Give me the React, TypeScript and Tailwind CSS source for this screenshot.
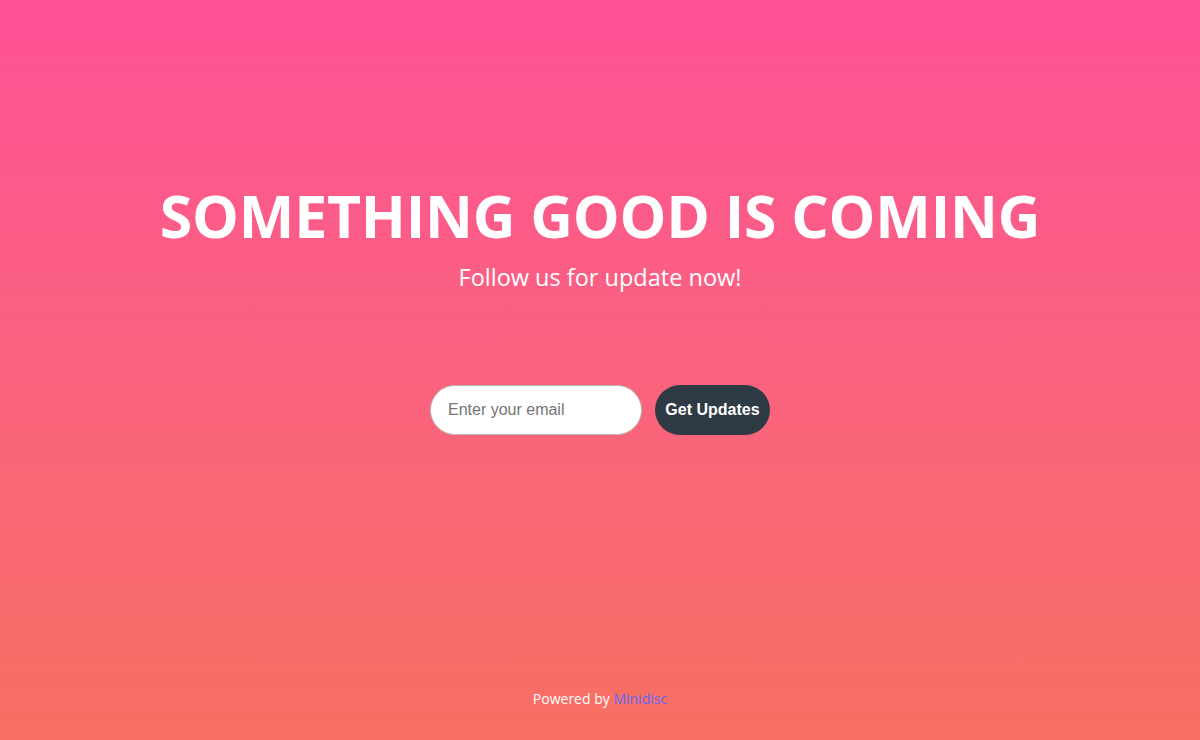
export default function App() {
  return (
    <div className="min-h-screen h-[740px] flex flex-col items-center bg-gradient-to-b from-[#fe5196] to-[#f77062] text-white font-['Open_Sans',sans-serif]">
      <main className="flex-1 flex flex-col items-center pt-[177px]">
        <h1 className="text-[59px] leading-[76px] font-bold tracking-[-0.25px] uppercase">
          Something good is coming
        </h1>
        <p className="text-[23.5px] leading-[30px] mt-[9px]">Follow us for update now!</p>

        <form className="flex items-center gap-[13px] mt-[93px]" onSubmit={(e) => e.preventDefault()}>
          <input
            type="email"
            placeholder="Enter your email"
            className="w-[212px] h-[50px] rounded-full bg-white border border-[#bbb] px-[17px] text-[16px] text-gray-800 placeholder:text-[#757575] font-['Liberation_Sans',Arial,sans-serif] outline-none"
          />
          <button
            type="submit"
            className="w-[115px] h-[50px] rounded-full bg-[#2f3b44] text-white font-bold text-[16px] font-['Liberation_Sans',Arial,sans-serif]"
          >
            Get Updates
          </button>
        </form>
      </main>

      <footer className="pb-[31px] text-[14px]">
        Powered by <a href="#" className="text-[#5b6bf5]">Minidisc</a>
      </footer>
    </div>
  )
}
